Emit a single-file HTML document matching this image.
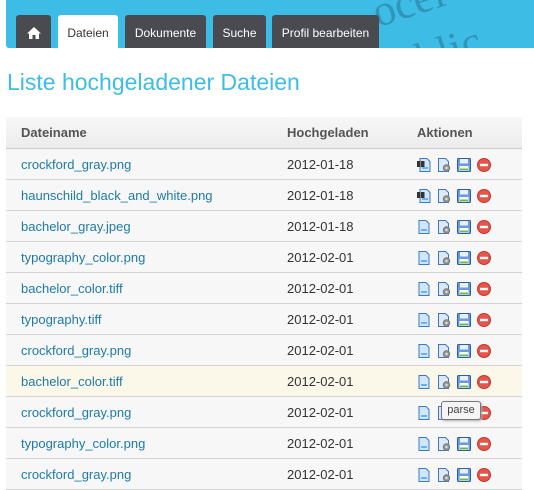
<!DOCTYPE html>
<html><head><style>
body{margin:0;width:534px;height:474px;overflow:hidden;background:#fff;font-family:"Liberation Sans",sans-serif;position:relative}
.bar{position:absolute;left:6px;top:0;width:540px;height:48px;background:#3dbde6;border-radius:0 0 0 3px;overflow:hidden}
.tab{position:absolute;top:15px;height:33px;background:#4a4b50;color:#fff;font-size:12px;line-height:36px;text-align:center;border-radius:3px 3px 0 0}
.tab.act{background:#fff;color:#333}
h1{position:absolute;left:7px;top:69px;margin:0;font-weight:normal;font-size:23px;color:#3ebce8}
table{position:absolute;left:6px;top:117px;width:516px;border-collapse:collapse;font-size:13px}
th{height:31px;text-align:left;color:#555;font-size:13px;background:linear-gradient(#f7f7f7,#ececec);border-bottom:1px solid #ccc;padding:0}
td{height:30px;border-bottom:1px solid #d4d4d4;background:#f7f7f7;padding:0;color:#333}
td:first-child,th:first-child{padding-left:15px;width:266px;border-radius:0}
td:nth-child(2),th:nth-child(2){width:130px}
a{color:#1d7ba6;text-decoration:none}
tr.hl td{background:#fbf8ea}
.ic{display:inline-block;vertical-align:middle;margin-right:6px;width:14px;height:14px}
.tip{position:absolute;left:441px;top:401px;width:38px;height:17px;border:1px solid #777;border-radius:3px;background:#f5f5f5;font-size:11px;line-height:17px;text-align:center;color:#444;box-shadow:1px 1px 2px #aaa}
</style></head><body>
<div class="bar">
<svg style="position:absolute;left:330px;top:-10px" width="210" height="60"><text x="40" y="25" font-family="Liberation Serif" font-size="44" fill="#1d4a66" opacity=".35" transform="rotate(-18 80 25)">ocel</text><text x="80" y="72" font-family="Liberation Serif" font-size="44" fill="#1d4a66" opacity=".35" transform="rotate(-18 120 60)">blic</text></svg>
</div>
<div class="tab" style="left:16px;width:35px"><svg width="16" height="14" viewBox="0 0 16 14" style="margin-top:11px"><path d="M8 1L1 7.5h2V13h3.5V9h3v4H13V7.5h2z" fill="#fff"/></svg></div>
<div class="tab act" style="left:58px;width:60px">Dateien</div>
<div class="tab" style="left:125px;width:81px">Dokumente</div>
<div class="tab" style="left:213px;width:53px">Suche</div>
<div class="tab" style="left:272px;width:107px">Profil bearbeiten</div>
<h1>Liste hochgeladener Dateien</h1>
<svg width="0" height="0" style="position:absolute"><defs>
<symbol id="doc" viewBox="0 0 14 14"><path d="M2 .5h7l3 3v10H2z" fill="#cfe6fb" stroke="#3b78c4"/><path d="M4 10h6" stroke="#4aa0e6" stroke-width="1.5"/></symbol>
<symbol id="bin" viewBox="0 0 14 14"><path d="M3 .5h7l3 3v10H3z" fill="#cfe6fb" stroke="#3b78c4"/><path d="M5 10h6" stroke="#4aa0e6" stroke-width="1.5"/><rect x="0" y="3" width="3.5" height="6" fill="#333"/><rect x="4" y="3" width="3.5" height="6" fill="#333"/></symbol>
<symbol id="gear" viewBox="0 0 14 14"><path d="M1.5 .5h7l3 3v10h-10z" fill="#dde9f6" stroke="#3b78c4"/><circle cx="9.5" cy="10" r="3.2" fill="#999" stroke="#777"/><circle cx="9.5" cy="10" r="1.2" fill="#ddd"/></symbol>
<symbol id="disk" viewBox="0 0 14 14"><rect x=".5" y=".5" width="13" height="13" rx="1" fill="#6a9ade" stroke="#2d5ea8"/><rect x="3" y="1" width="8" height="4.5" fill="#e8f0fb"/><rect x="2.5" y="8" width="9" height="5" fill="#fff"/><rect x="3" y="10.5" width="8" height="2" fill="#69b84a"/></symbol>
<symbol id="del" viewBox="0 0 14 14"><circle cx="7" cy="7" r="6.5" fill="#e5554c" stroke="#c0392f"/><rect x="3" y="5.8" width="8" height="2.4" fill="#fff"/></symbol>
</defs></svg>
<table>
<tr><th>Dateiname</th><th>Hochgeladen</th><th>Aktionen</th></tr>
<tr><td><a>crockford_gray.png</a></td><td>2012-01-18</td><td><svg class="ic"><use href="#bin"/></svg><svg class="ic"><use href="#gear"/></svg><svg class="ic"><use href="#disk"/></svg><svg class="ic"><use href="#del"/></svg></td></tr>
<tr><td><a>haunschild_black_and_white.png</a></td><td>2012-01-18</td><td><svg class="ic"><use href="#bin"/></svg><svg class="ic"><use href="#gear"/></svg><svg class="ic"><use href="#disk"/></svg><svg class="ic"><use href="#del"/></svg></td></tr>
<tr><td><a>bachelor_gray.jpeg</a></td><td>2012-01-18</td><td><svg class="ic"><use href="#doc"/></svg><svg class="ic"><use href="#gear"/></svg><svg class="ic"><use href="#disk"/></svg><svg class="ic"><use href="#del"/></svg></td></tr>
<tr><td><a>typography_color.png</a></td><td>2012-02-01</td><td><svg class="ic"><use href="#doc"/></svg><svg class="ic"><use href="#gear"/></svg><svg class="ic"><use href="#disk"/></svg><svg class="ic"><use href="#del"/></svg></td></tr>
<tr><td><a>bachelor_color.tiff</a></td><td>2012-02-01</td><td><svg class="ic"><use href="#doc"/></svg><svg class="ic"><use href="#gear"/></svg><svg class="ic"><use href="#disk"/></svg><svg class="ic"><use href="#del"/></svg></td></tr>
<tr><td><a>typography.tiff</a></td><td>2012-02-01</td><td><svg class="ic"><use href="#doc"/></svg><svg class="ic"><use href="#gear"/></svg><svg class="ic"><use href="#disk"/></svg><svg class="ic"><use href="#del"/></svg></td></tr>
<tr><td><a>crockford_gray.png</a></td><td>2012-02-01</td><td><svg class="ic"><use href="#doc"/></svg><svg class="ic"><use href="#gear"/></svg><svg class="ic"><use href="#disk"/></svg><svg class="ic"><use href="#del"/></svg></td></tr>
<tr class="hl"><td><a>bachelor_color.tiff</a></td><td>2012-02-01</td><td><svg class="ic"><use href="#doc"/></svg><svg class="ic"><use href="#gear"/></svg><svg class="ic"><use href="#disk"/></svg><svg class="ic"><use href="#del"/></svg></td></tr>
<tr><td><a>crockford_gray.png</a></td><td>2012-02-01</td><td><svg class="ic"><use href="#doc"/></svg><svg class="ic"><use href="#gear"/></svg><svg class="ic"><use href="#disk"/></svg><svg class="ic"><use href="#del"/></svg></td></tr>
<tr><td><a>typography_color.png</a></td><td>2012-02-01</td><td><svg class="ic"><use href="#doc"/></svg><svg class="ic"><use href="#gear"/></svg><svg class="ic"><use href="#disk"/></svg><svg class="ic"><use href="#del"/></svg></td></tr>
<tr><td><a>crockford_gray.png</a></td><td>2012-02-01</td><td><svg class="ic"><use href="#doc"/></svg><svg class="ic"><use href="#gear"/></svg><svg class="ic"><use href="#disk"/></svg><svg class="ic"><use href="#del"/></svg></td></tr>
</table>
<div class="tip">parse</div>
</body></html>
